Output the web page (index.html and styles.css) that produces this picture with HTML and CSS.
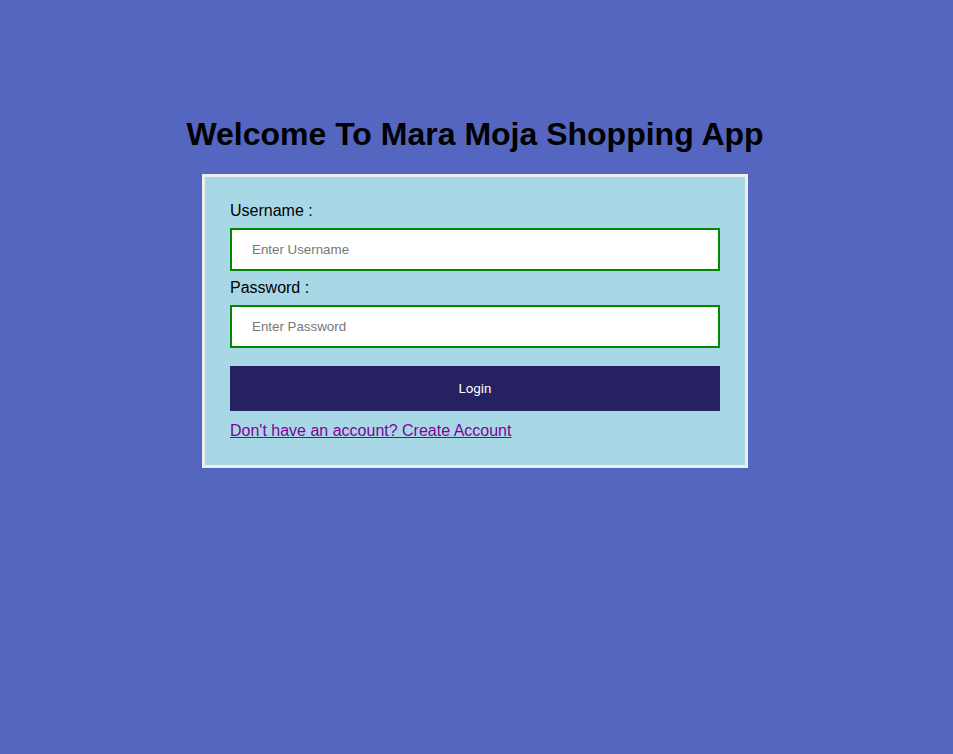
FILE: index.html
```html
<!DOCTYPE html>
<html>
<head>
<meta charset="utf-8">
<title>Mara Moja Shopping App</title>
<link rel="stylesheet" href="styles.css">
</head>
<body>
<div class="page">
  <h1 class="title">Welcome To Mara Moja Shopping App</h1>
  <form class="card">
    <label class="label" for="u">Username :</label>
    <input class="field" id="u" type="text" placeholder="Enter Username">
    <label class="label" for="p">Password :</label>
    <input class="field" id="p" type="password" placeholder="Enter Password">
    <button class="btn" type="button">Login</button>
    <a class="link" href="#">Don't have an account? Create Account</a>
  </form>
</div>
</body>
</html>
```
FILE: styles.css
```css
html, body {
  margin: 0;
  padding: 0;
  background: #5566c1;
  font-family: "Liberation Sans", Arial, sans-serif;
}
.page {
  width: 950px;
  padding-top: 116px;
  display: flex;
  flex-direction: column;
  align-items: center;
}
.title {
  margin: 0 0 21px;
  font-size: 32px;
  font-weight: bold;
  color: #000;
  line-height: 37px;
}
.card {
  width: 490px;
  padding: 25px 25px 25px;
  background: #a8d8e6;
  border: 3px solid #eeeeee;
  display: flex;
  flex-direction: column;
}
.label {
  font-size: 16px;
  line-height: 18px;
  color: #000;
  margin-bottom: 8px;
}
.field {
  box-sizing: border-box;
  width: 490px;
  height: 43px;
  border: 2px solid #008800;
  background: #fff;
  padding: 0 20px;
  font-family: "Liberation Sans", Arial, sans-serif;
  font-size: 13.33px;
  margin: 0 0 8px;
  outline: none;
}
.field::placeholder {
  color: #777;
}
.btn {
  margin-top: 10px;
  height: 45px;
  border: none;
  background: #262261;
  color: #fff;
  font-family: Roboto, "Liberation Sans", sans-serif;
  font-size: 13.33px;
  cursor: pointer;
}
.link {
  margin-top: 11px;
  font-size: 16px;
  line-height: 18px;
  color: #800099;
  align-self: flex-start;
}
```
